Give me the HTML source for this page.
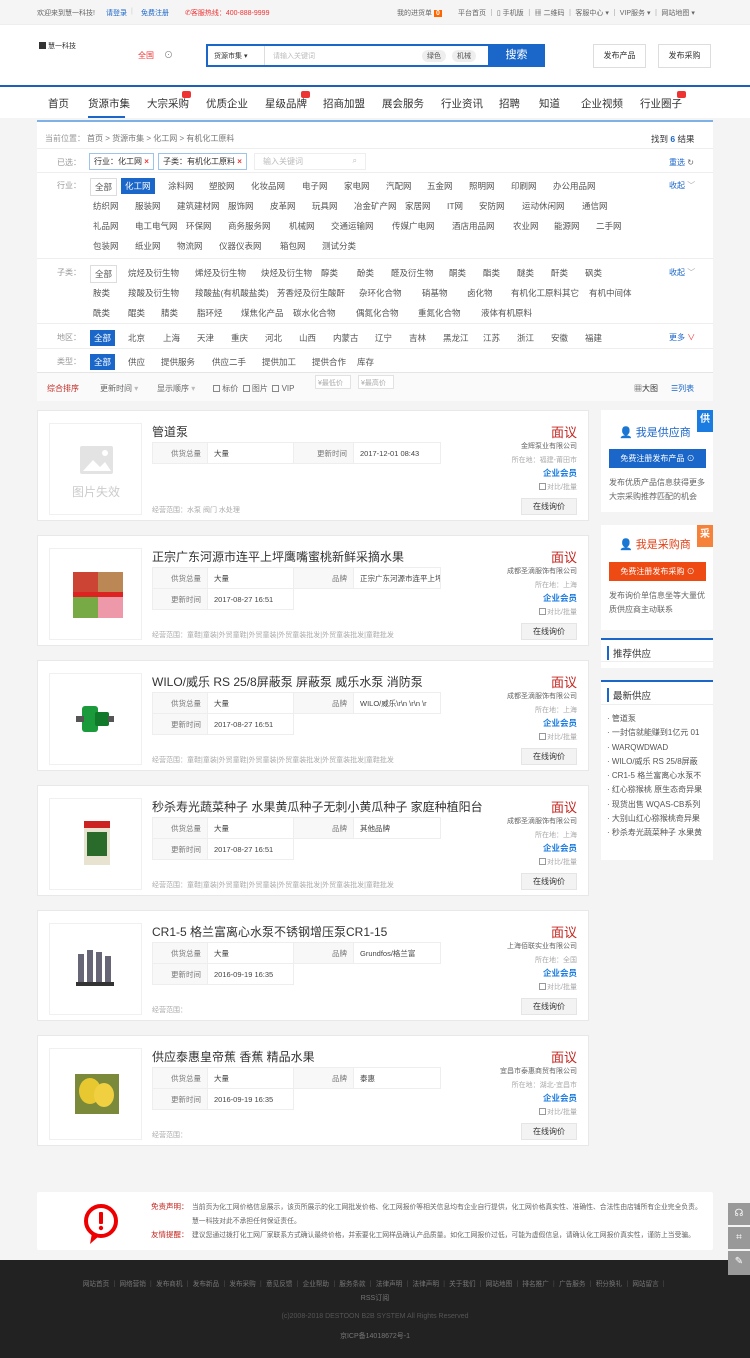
<!DOCTYPE html>
<html><head><meta charset="utf-8"><style>
*{margin:0;padding:0;box-sizing:border-box}
body{width:750px;height:1358px;background:#f4f4f4;font-family:"Liberation Sans","Noto Sans CJK SC",sans-serif;font-size:9px;color:#666;position:relative;overflow:hidden}
.a{position:absolute;white-space:nowrap}
.top{position:absolute;left:0;top:0;width:750px;height:25px;background:#f5f5f5;border-bottom:1px solid #eee}
.hdr{position:absolute;left:0;top:25px;width:750px;height:61px;background:#fff}
.nav{position:absolute;left:0;top:85px;width:750px;height:33px;background:#fff;border-top:2px solid #1e5fb8}
.nav span{position:absolute;top:9px;font-size:10.5px;color:#333}
.hot{position:absolute;width:9px;height:7px;background:#e33;border-radius:2px;top:4px}
.panel{position:absolute;left:37px;top:120px;width:676px;height:279px;background:#fff;border-top:2px solid #7eb2e6}
.lbl{color:#999}
.opt{position:absolute;font-size:8.5px;color:#555}
.sel{background:#1a66c9;color:#fff;padding:2px 4px}
.bx{border:1px solid #ddd;padding:2px 4px}
.hr{position:absolute;left:0;width:676px;height:1px;background:#eee}
.card{position:absolute;left:37px;width:552px;height:111px;background:#fff;border:1px solid #e8e8e8}
.img{position:absolute;left:11px;top:12px;width:93px;height:92px;border:1px solid #f0f0f0;background:#fff}
.ttl{position:absolute;left:114px;top:12px;font-size:12px;color:#333}
.tb{position:absolute;left:114px;top:31px;border-collapse:collapse;font-size:7.5px}
.tb td{border:1px solid #eee;height:21px;padding:0 6px;color:#444;white-space:nowrap;overflow:hidden;max-width:87px}
.tb td.l{background:#f8f8f8;color:#777;text-align:right}
.pr{position:absolute;right:11px;top:11px;font-size:13px;color:#c5261f}
.co{position:absolute;right:11px;top:30px;font-size:7px;color:#666}
.loc{position:absolute;right:11px;top:44px;font-size:7px;color:#aaa}
.vip{position:absolute;right:11px;top:56px;font-size:8.5px;color:#1a7be0;font-weight:bold}
.cmp{position:absolute;right:11px;top:71px;font-size:7px;color:#aaa}
.cmp i{display:inline-block;width:7px;height:7px;border:1px solid #999;vertical-align:-1px;margin-right:1px}
.btn{position:absolute;right:11px;top:87px;width:56px;height:17px;background:#f3f3f3;border:1px solid #e5e5e5;font-size:8px;color:#333;text-align:center;line-height:15px}
.scope{position:absolute;left:114px;top:94px;font-size:7px;color:#aaa}
.side{position:absolute;left:601px;width:112px;background:#fff}
</style></head><body>
<div class="top">
<span class="a" style="left:37px;top:8px;font-size:7px">欢迎来到慧一科技!</span>
<span class="a" style="left:106px;top:8px;font-size:7px;color:#1a66c9">请登录</span>
<span class="a" style="left:131px;top:8px;font-size:7px;color:#ccc">|</span>
<span class="a" style="left:141px;top:8px;font-size:7px;color:#1a66c9">免费注册</span>
<span class="a" style="left:185px;top:8px;font-size:7px;color:#e33">✆客服热线：400-888-9999</span>
<span class="a" style="left:397px;top:8px;font-size:7px">我的进货单 <b style="background:#f60;color:#fff;padding:0 2px">0</b></span>
<span class="a" style="left:458px;top:8px;font-size:7px">平台首页 ｜ ▯ 手机版 ｜ ▦ 二维码 ｜ 客服中心 ▾ ｜ VIP服务 ▾ ｜ 网站地图 ▾</span>
</div>
<div class="hdr">
<span class="a" style="left:39px;top:16px;font-size:7px;color:#333"><b style="display:inline-block;width:7px;height:7px;background:#333;vertical-align:-1px"></b> 慧一科技</span>
<span class="a" style="left:138px;top:25px;font-size:8px;color:#e33">全国</span>
<span class="a" style="left:164px;top:23px;font-size:9px;color:#888">⊙</span>
<div class="a" style="left:206px;top:19px;width:282px;height:23px;border:2px solid #1a66c9;border-right:none;background:#fff"></div>
<span class="a" style="left:214px;top:26px;font-size:7px;color:#333">货源市集 ▾</span>
<div class="a" style="left:264px;top:21px;width:1px;height:19px;background:#ddd"></div>
<span class="a" style="left:273px;top:26px;font-size:7px;color:#bbb">请输入关键词</span>
<span class="a" style="left:422px;top:25px;font-size:7px;color:#555;background:#eee;border-radius:8px;padding:1px 5px">绿色</span>
<span class="a" style="left:452px;top:25px;font-size:7px;color:#555;background:#eee;border-radius:8px;padding:1px 5px">机械</span>
<div class="a" style="left:488px;top:19px;width:57px;height:23px;background:#1a66c9;color:#fff;font-size:11px;text-align:center;line-height:23px">搜索</div>
<div class="a" style="left:593px;top:19px;width:53px;height:24px;border:1px solid #ddd;font-size:8px;color:#333;text-align:center;line-height:22px">发布产品</div>
<div class="a" style="left:658px;top:19px;width:53px;height:24px;border:1px solid #ddd;font-size:8px;color:#333;text-align:center;line-height:22px">发布采购</div>
</div>
<div class="nav">
<span style="left:48px">首页</span><span style="left:88px">货源市集</span><div class="a" style="left:88px;top:29px;width:37px;height:2px;background:#1a66c9"></div>
<span style="left:147px">大宗采购</span><i class="hot" style="left:182px"></i>
<span style="left:206px">优质企业</span><span style="left:265px">星级品牌</span><i class="hot" style="left:301px"></i>
<span style="left:323px">招商加盟</span><span style="left:382px">展会服务</span><span style="left:441px">行业资讯</span>
<span style="left:499px">招聘</span><span style="left:539px">知道</span><span style="left:581px">企业视频</span><span style="left:640px">行业圈子</span><i class="hot" style="left:677px"></i>
</div>
<div class="panel">
<span class="a lbl" style="left:8px;top:11px;font-size:8px">当前位置：</span><span class="a" style="left:50px;top:11px;font-size:8px;color:#777">首页 &gt; 货源市集 &gt; 化工网 &gt; 有机化工原料</span>
<span class="a" style="left:614px;top:11px;font-size:8.5px;color:#333">找到 <b style="color:#1a66c9">6</b> 结果</span>
<div class="hr" style="top:26px"></div>
<span class="a lbl" style="left:20px;top:35px;font-size:8px">已选：</span>
<span class="a" style="left:52px;top:31px;border:1px solid #9ec4ec;padding:2px 4px;font-size:8px;color:#333">行业：化工网 <b style="color:#e33">×</b></span>
<span class="a" style="left:121px;top:31px;border:1px solid #9ec4ec;padding:2px 4px;font-size:8px;color:#333">子类：有机化工原料 <b style="color:#e33">×</b></span>
<span class="a" style="left:217px;top:31px;width:112px;border:1px solid #eee;padding:2px 8px;font-size:8px;color:#bbb">输入关键词<span style="float:right">⌕</span></span>
<span class="a" style="left:632px;top:35px;font-size:8px;color:#1a66c9">重选 <span style="color:#666">↻</span></span>
<div class="hr" style="top:50px"></div>
<span class="a lbl" style="left:20px;top:58px;font-size:8px">行业：</span>
<span class="opt bx" style="left:53px;top:56px">全部</span><span class="opt sel" style="left:84px;top:56px">化工网</span>
<span class="opt" style="left:131px;top:58px">涂料网</span><span class="opt" style="left:172px;top:58px">塑胶网</span><span class="opt" style="left:214px;top:58px">化妆品网</span><span class="opt" style="left:265px;top:58px">电子网</span><span class="opt" style="left:307px;top:58px">家电网</span><span class="opt" style="left:349px;top:58px">汽配网</span><span class="opt" style="left:390px;top:58px">五金网</span><span class="opt" style="left:432px;top:58px">照明网</span><span class="opt" style="left:474px;top:58px">印刷网</span><span class="opt" style="left:516px;top:58px">办公用品网</span>
<span class="a" style="left:632px;top:58px;font-size:8px;color:#1a66c9">收起 <span style="color:#aaa">﹀</span></span>
<span class="opt" style="left:56px;top:78px">纺织网</span><span class="opt" style="left:98px;top:78px">服装网</span><span class="opt" style="left:140px;top:78px">建筑建材网</span><span class="opt" style="left:191px;top:78px">服饰网</span><span class="opt" style="left:233px;top:78px">皮革网</span><span class="opt" style="left:275px;top:78px">玩具网</span><span class="opt" style="left:317px;top:78px">冶金矿产网</span><span class="opt" style="left:368px;top:78px">家居网</span><span class="opt" style="left:410px;top:78px">IT网</span><span class="opt" style="left:442px;top:78px">安防网</span><span class="opt" style="left:485px;top:78px">运动休闲网</span><span class="opt" style="left:545px;top:78px">通信网</span>
<span class="opt" style="left:56px;top:98px">礼品网</span><span class="opt" style="left:98px;top:98px">电工电气网</span><span class="opt" style="left:149px;top:98px">环保网</span><span class="opt" style="left:191px;top:98px">商务服务网</span><span class="opt" style="left:252px;top:98px">机械网</span><span class="opt" style="left:294px;top:98px">交通运输网</span><span class="opt" style="left:355px;top:98px">传媒广电网</span><span class="opt" style="left:415px;top:98px">酒店用品网</span><span class="opt" style="left:476px;top:98px">农业网</span><span class="opt" style="left:517px;top:98px">能源网</span><span class="opt" style="left:559px;top:98px">二手网</span>
<span class="opt" style="left:56px;top:118px">包装网</span><span class="opt" style="left:98px;top:118px">纸业网</span><span class="opt" style="left:140px;top:118px">物流网</span><span class="opt" style="left:182px;top:118px">仪器仪表网</span><span class="opt" style="left:243px;top:118px">箱包网</span><span class="opt" style="left:285px;top:118px">测试分类</span>
<div class="hr" style="top:136px"></div>
<span class="a lbl" style="left:20px;top:145px;font-size:8px">子类：</span>
<span class="opt bx" style="left:53px;top:143px">全部</span>
<span class="opt" style="left:91px;top:145px">烷烃及衍生物</span><span class="opt" style="left:158px;top:145px">烯烃及衍生物</span><span class="opt" style="left:224px;top:145px">炔烃及衍生物</span><span class="opt" style="left:284px;top:145px">醇类</span><span class="opt" style="left:320px;top:145px">酚类</span><span class="opt" style="left:354px;top:145px">醛及衍生物</span><span class="opt" style="left:412px;top:145px">酮类</span><span class="opt" style="left:446px;top:145px">酯类</span><span class="opt" style="left:480px;top:145px">醚类</span><span class="opt" style="left:514px;top:145px">酐类</span><span class="opt" style="left:548px;top:145px">砜类</span>
<span class="a" style="left:632px;top:145px;font-size:8px;color:#1a66c9">收起 <span style="color:#aaa">﹀</span></span>
<span class="opt" style="left:56px;top:165px">胺类</span><span class="opt" style="left:91px;top:165px">羧酸及衍生物</span><span class="opt" style="left:158px;top:165px">羧酸盐(有机酸盐类)</span><span class="opt" style="left:240px;top:165px">芳香烃及衍生酸酐</span><span class="opt" style="left:322px;top:165px">杂环化合物</span><span class="opt" style="left:385px;top:165px">硝基物</span><span class="opt" style="left:430px;top:165px">卤化物</span><span class="opt" style="left:474px;top:165px">有机化工原料其它</span><span class="opt" style="left:552px;top:165px">有机中间体</span>
<span class="opt" style="left:56px;top:185px">酰类</span><span class="opt" style="left:91px;top:185px">醌类</span><span class="opt" style="left:124px;top:185px">腈类</span><span class="opt" style="left:160px;top:185px">脂环烃</span><span class="opt" style="left:204px;top:185px">煤焦化产品</span><span class="opt" style="left:256px;top:185px">碳水化合物</span><span class="opt" style="left:319px;top:185px">偶氮化合物</span><span class="opt" style="left:381px;top:185px">重氮化合物</span><span class="opt" style="left:444px;top:185px">液体有机原料</span>
<div class="hr" style="top:201px"></div>
<span class="a lbl" style="left:20px;top:210px;font-size:8px">地区：</span>
<span class="opt sel" style="left:53px;top:208px">全部</span>
<span class="opt" style="left:91px;top:210px">北京</span><span class="opt" style="left:126px;top:210px">上海</span><span class="opt" style="left:160px;top:210px">天津</span><span class="opt" style="left:194px;top:210px">重庆</span><span class="opt" style="left:228px;top:210px">河北</span><span class="opt" style="left:262px;top:210px">山西</span><span class="opt" style="left:296px;top:210px">内蒙古</span><span class="opt" style="left:338px;top:210px">辽宁</span><span class="opt" style="left:372px;top:210px">吉林</span><span class="opt" style="left:406px;top:210px">黑龙江</span><span class="opt" style="left:446px;top:210px">江苏</span><span class="opt" style="left:480px;top:210px">浙江</span><span class="opt" style="left:514px;top:210px">安徽</span><span class="opt" style="left:548px;top:210px">福建</span>
<span class="a" style="left:632px;top:210px;font-size:8px;color:#1a66c9">更多 <span style="color:#e33">∨</span></span>
<div class="hr" style="top:226px"></div>
<span class="a lbl" style="left:20px;top:234px;font-size:8px">类型：</span>
<span class="opt sel" style="left:53px;top:232px">全部</span>
<span class="opt" style="left:91px;top:234px">供应</span><span class="opt" style="left:124px;top:234px">提供服务</span><span class="opt" style="left:175px;top:234px">供应二手</span><span class="opt" style="left:225px;top:234px">提供加工</span><span class="opt" style="left:275px;top:234px">提供合作</span><span class="opt" style="left:320px;top:234px">库存</span>
<div class="hr" style="top:250px;background:#e5e5e5"></div>
<div class="a" style="left:0;top:251px;width:676px;height:28px;background:#fafafa"></div>
<span class="a" style="left:10px;top:261px;font-size:8px;color:#c5261f">综合排序</span>
<span class="a" style="left:63px;top:261px;font-size:8px;color:#666">更新时间 <span style="color:#bbb">▾</span></span>
<span class="a" style="left:120px;top:261px;font-size:8px;color:#666">显示顺序 <span style="color:#bbb">▾</span></span>
<span class="a" style="left:176px;top:261px;font-size:8px;color:#666"><i style="display:inline-block;width:7px;height:7px;border:1px solid #888;vertical-align:-1px"></i> 标价 &nbsp;<i style="display:inline-block;width:7px;height:7px;border:1px solid #888;vertical-align:-1px"></i> 图片 &nbsp;<i style="display:inline-block;width:7px;height:7px;border:1px solid #888;vertical-align:-1px"></i> VIP</span>
<span class="a" style="left:278px;top:253px;width:36px;height:14px;border:1px solid #e2e2e2;background:#fff;font-size:7px;color:#aaa;padding:2px">¥最低价</span>
<span class="a" style="left:321px;top:253px;width:36px;height:14px;border:1px solid #e2e2e2;background:#fff;font-size:7px;color:#aaa;padding:2px">¥最高价</span>
<span class="a" style="left:597px;top:261px;font-size:8px;color:#333">▦大图</span>
<span class="a" style="left:634px;top:261px;font-size:8px;color:#1a66c9">☰列表</span>
</div>

<!-- cards -->
<div class="card" style="top:410px">
<div class="img"><svg width="93" height="92"><g fill="#e3e3e3"><rect x="30" y="22" width="33" height="28" rx="2"/></g><path d="M33 47l10-11 7 7 5-5 6 9z" fill="#fff"/><circle cx="55" cy="29" r="3" fill="#fff"/><text x="46" y="72" text-anchor="middle" font-size="12" fill="#ccc" font-family="Noto Sans CJK SC">图片失效</text></svg></div>
<div class="ttl">管道泵</div>
<table class="tb"><tr><td class="l" style="width:55px">供货总量</td><td style="width:86px">大量</td><td class="l" style="width:60px">更新时间</td><td style="width:87px">2017-12-01 08:43</td></tr></table>
<div class="pr">面议</div><div class="co">金辉泵业有限公司</div><div class="loc">所在地：福建-莆田市</div><div class="vip">企业会员</div><div class="cmp"><i></i>对比/批量</div><div class="btn">在线询价</div>
<div class="scope">经营范围：水泵 阀门 水处理</div>
</div>

<div class="card" style="top:535px">
<div class="img"><svg width="93" height="92"><rect x="23" y="23" width="50" height="46" fill="#6b7d3a"/><rect x="23" y="23" width="25" height="20" fill="#c43"/><rect x="48" y="23" width="25" height="20" fill="#b85"/><rect x="23" y="43" width="50" height="5" fill="#d22"/><rect x="23" y="48" width="25" height="21" fill="#7a4"/><rect x="48" y="48" width="25" height="21" fill="#e9a"/></svg></div>
<div class="ttl">正宗广东河源市连平上坪鹰嘴蜜桃新鲜采摘水果</div>
<table class="tb"><tr><td class="l" style="width:55px">供货总量</td><td style="width:86px">大量</td><td class="l" style="width:60px">品牌</td><td style="width:87px">正宗广东河源市连平上坪</td></tr><tr><td class="l">更新时间</td><td>2017-08-27 16:51</td></tr></table>
<div class="pr">面议</div><div class="co">成都圣滴服饰有限公司</div><div class="loc">所在地：上海</div><div class="vip">企业会员</div><div class="cmp"><i></i>对比/批量</div><div class="btn">在线询价</div>
<div class="scope">经营范围：童鞋|童装|外贸童鞋|外贸童装|外贸童装批发|外贸童装批发|童鞋批发</div>
</div>

<div class="card" style="top:660px">
<div class="img"><svg width="93" height="92"><rect x="32" y="32" width="16" height="26" rx="3" fill="#1a9a3a"/><rect x="45" y="38" width="14" height="14" rx="2" fill="#117a2a"/><rect x="26" y="42" width="8" height="6" fill="#555"/><rect x="58" y="42" width="6" height="6" fill="#555"/></svg></div>
<div class="ttl">WILO/威乐 RS 25/8屏蔽泵 屏蔽泵 威乐水泵 消防泵</div>
<table class="tb"><tr><td class="l" style="width:55px">供货总量</td><td style="width:86px">大量</td><td class="l" style="width:60px">品牌</td><td style="width:87px">WILO/威乐\r\n \r\n \r</td></tr><tr><td class="l">更新时间</td><td>2017-08-27 16:51</td></tr></table>
<div class="pr">面议</div><div class="co">成都圣滴服饰有限公司</div><div class="loc">所在地：上海</div><div class="vip">企业会员</div><div class="cmp"><i></i>对比/批量</div><div class="btn">在线询价</div>
<div class="scope">经营范围：童鞋|童装|外贸童鞋|外贸童装|外贸童装批发|外贸童装批发|童鞋批发</div>
</div>

<div class="card" style="top:785px">
<div class="img"><svg width="93" height="92"><rect x="34" y="22" width="26" height="44" fill="#e8e2d0"/><rect x="37" y="33" width="20" height="24" fill="#2a6a2a"/><rect x="34" y="22" width="26" height="7" fill="#c22"/></svg></div>
<div class="ttl">秒杀寿光蔬菜种子 水果黄瓜种子无刺小黄瓜种子 家庭种植阳台</div>
<table class="tb"><tr><td class="l" style="width:55px">供货总量</td><td style="width:86px">大量</td><td class="l" style="width:60px">品牌</td><td style="width:87px">其他品牌</td></tr><tr><td class="l">更新时间</td><td>2017-08-27 16:51</td></tr></table>
<div class="pr">面议</div><div class="co">成都圣滴服饰有限公司</div><div class="loc">所在地：上海</div><div class="vip">企业会员</div><div class="cmp"><i></i>对比/批量</div><div class="btn">在线询价</div>
<div class="scope">经营范围：童鞋|童装|外贸童鞋|外贸童装|外贸童装批发|外贸童装批发|童鞋批发</div>
</div>

<div class="card" style="top:910px">
<div class="img"><svg width="93" height="92"><g fill="#667"><rect x="28" y="30" width="6" height="30"/><rect x="37" y="26" width="6" height="34"/><rect x="46" y="28" width="6" height="32"/><rect x="55" y="32" width="6" height="28"/></g><rect x="26" y="58" width="38" height="4" fill="#333"/></svg></div>
<div class="ttl">CR1-5 格兰富离心水泵不锈钢增压泵CR1-15</div>
<table class="tb"><tr><td class="l" style="width:55px">供货总量</td><td style="width:86px">大量</td><td class="l" style="width:60px">品牌</td><td style="width:87px">Grundfos/格兰富</td></tr><tr><td class="l">更新时间</td><td>2016-09-19 16:35</td></tr></table>
<div class="pr">面议</div><div class="co">上海佰联实业有限公司</div><div class="loc">所在地：全国</div><div class="vip">企业会员</div><div class="cmp"><i></i>对比/批量</div><div class="btn">在线询价</div>
<div class="scope">经营范围：</div>
</div>

<div class="card" style="top:1035px">
<div class="img"><svg width="93" height="92"><rect x="25" y="25" width="44" height="40" fill="#7a8a3a"/><ellipse cx="40" cy="42" rx="11" ry="13" fill="#e8c830"/><ellipse cx="54" cy="46" rx="10" ry="12" fill="#f0d040"/></svg></div>
<div class="ttl">供应泰惠皇帝蕉 香蕉 精品水果</div>
<table class="tb"><tr><td class="l" style="width:55px">供货总量</td><td style="width:86px">大量</td><td class="l" style="width:60px">品牌</td><td style="width:87px">泰惠</td></tr><tr><td class="l">更新时间</td><td>2016-09-19 16:35</td></tr></table>
<div class="pr">面议</div><div class="co">宜昌市泰惠商贸有限公司</div><div class="loc">所在地：湖北-宜昌市</div><div class="vip">企业会员</div><div class="cmp"><i></i>对比/批量</div><div class="btn">在线询价</div>
<div class="scope">经营范围：</div>
</div>

<!-- sidebar -->
<div class="side" style="top:410px;height:102px">
<div class="a" style="left:96px;top:0;width:16px;height:22px;background:#1a7be0;color:#fff;font-size:10px;text-align:center;line-height:20px;font-weight:bold">供</div>
<span class="a" style="left:18px;top:14px;font-size:11px;color:#1a66c9">👤 我是供应商</span>
<div class="a" style="left:8px;top:39px;width:97px;height:19px;background:#1a66c9;color:#fff;font-size:8px;text-align:center;line-height:19px">免费注册发布产品 ⊙</div>
<span class="a" style="left:8px;top:66px;font-size:8px;color:#666;line-height:14px">发布优质产品信息获得更多<br>大宗采购推荐匹配的机会</span>
</div>
<div class="side" style="top:525px;height:105px">
<div class="a" style="left:96px;top:0;width:16px;height:22px;background:#f5813a;color:#fff;font-size:10px;text-align:center;line-height:20px;font-weight:bold">采</div>
<span class="a" style="left:18px;top:11px;font-size:11px;color:#e0431a">👤 我是采购商</span>
<div class="a" style="left:8px;top:37px;width:97px;height:19px;background:#ee4a13;color:#fff;font-size:8px;text-align:center;line-height:19px">免费注册发布采购 ⊙</div>
<span class="a" style="left:8px;top:64px;font-size:8px;color:#666;line-height:14px">发布询价单信息坐等大量优<br>质供应商主动联系</span>
</div>
<div class="side" style="top:638px;height:30px;border-top:2px solid #1a66c9">
<span class="a" style="left:6px;top:6px;font-size:9.5px;color:#333;border-left:2px solid #1a66c9;padding-left:4px">推荐供应</span>
<div class="a" style="left:0;top:21px;width:112px;height:1px;background:#eee"></div>
</div>
<div class="side" style="top:680px;height:180px;border-top:2px solid #1a66c9">
<span class="a" style="left:6px;top:6px;font-size:9.5px;color:#333;border-left:2px solid #1a66c9;padding-left:4px">最新供应</span>
<div class="a" style="left:0;top:22px;width:112px;height:1px;background:#eee"></div>
<div class="a" style="left:6px;top:30px;font-size:8px;color:#555;line-height:14.3px">· 管道泵<br>· 一封信就能赚到1亿元 01<br>· WARQWDWAD<br>· WILO/威乐 RS 25/8屏蔽<br>· CR1-5 格兰富离心水泵不<br>· 红心猕猴桃 原生态奇异果<br>· 现货出售 WQAS-CB系列<br>· 大别山红心猕猴桃奇异果<br>· 秒杀寿光蔬菜种子 水果黄</div>
</div>

<!-- disclaimer -->
<div class="a" style="left:37px;top:1192px;width:676px;height:58px;background:#fff;border-radius:2px">
<svg class="a" style="left:45px;top:11px" width="40" height="42"><circle cx="19" cy="18" r="15" fill="none" stroke="#e00" stroke-width="4"/><path d="M10 30 L8 41 L17 33z" fill="#e00"/><rect x="17" y="9" width="4" height="12" rx="1" fill="#e00"/><circle cx="19" cy="25" r="2.2" fill="#e00"/></svg>
<span class="a" style="left:114px;top:9px;font-size:7.5px;color:#c5261f">免责声明：</span>
<span class="a" style="left:155px;top:9px;font-size:6.8px;color:#666;line-height:14px;white-space:normal;width:516px">当前页为化工网价格信息展示，该页所展示的化工网批发价格、化工网报价等相关信息均有企业自行提供，化工网价格真实性、准确性、合法性由店铺所有企业完全负责。慧一科技对此不承担任何保证责任。</span>
<span class="a" style="left:114px;top:37px;font-size:7.5px;color:#c5261f">友情提醒：</span>
<span class="a" style="left:155px;top:37px;font-size:6.8px;color:#666;line-height:14px;white-space:normal;width:516px">建议您通过拨打化工网厂家联系方式确认最终价格，并索要化工网样品确认产品质量。如化工网报价过低，可能为虚假信息，请确认化工网报价真实性，谨防上当受骗。</span>
</div>

<!-- footer -->
<div class="a" style="left:0;top:1260px;width:750px;height:98px;background:#222">
<div class="a" style="left:0;top:18px;width:750px;text-align:center;font-size:6.6px;color:#777">网站首页 ｜ 网络营销 ｜ 发布商机 ｜ 发布新品 ｜ 发布采购 ｜ 意见反馈 ｜ 企业帮助 ｜ 服务条款 ｜ 法律声明 ｜ 法律声明 ｜ 关于我们 ｜ 网站地图 ｜ 排名推广 ｜ 广告服务 ｜ 积分换礼 ｜ 网站留言 ｜</div>
<div class="a" style="left:0;top:33px;width:750px;text-align:center;font-size:7px;color:#777">RSS订阅</div>
<div class="a" style="left:0;top:53px;width:750px;text-align:center;font-size:7px;color:#555">(c)2008-2018 DESTOON B2B SYSTEM All Rights Reserved</div>
<div class="a" style="left:0;top:71px;width:750px;text-align:center;font-size:7px;color:#777">京ICP备14018672号-1</div>
</div>
<div class="a" style="left:728px;top:1203px;width:22px;height:22px;background:#999;color:#fff;text-align:center;line-height:22px;font-size:10px">☊</div>
<div class="a" style="left:728px;top:1227px;width:22px;height:22px;background:#999;color:#fff;text-align:center;line-height:22px;font-size:10px">⌗</div>
<div class="a" style="left:728px;top:1251px;width:22px;height:24px;background:#999;color:#fff;text-align:center;line-height:22px;font-size:10px">✎</div>
</body></html>
